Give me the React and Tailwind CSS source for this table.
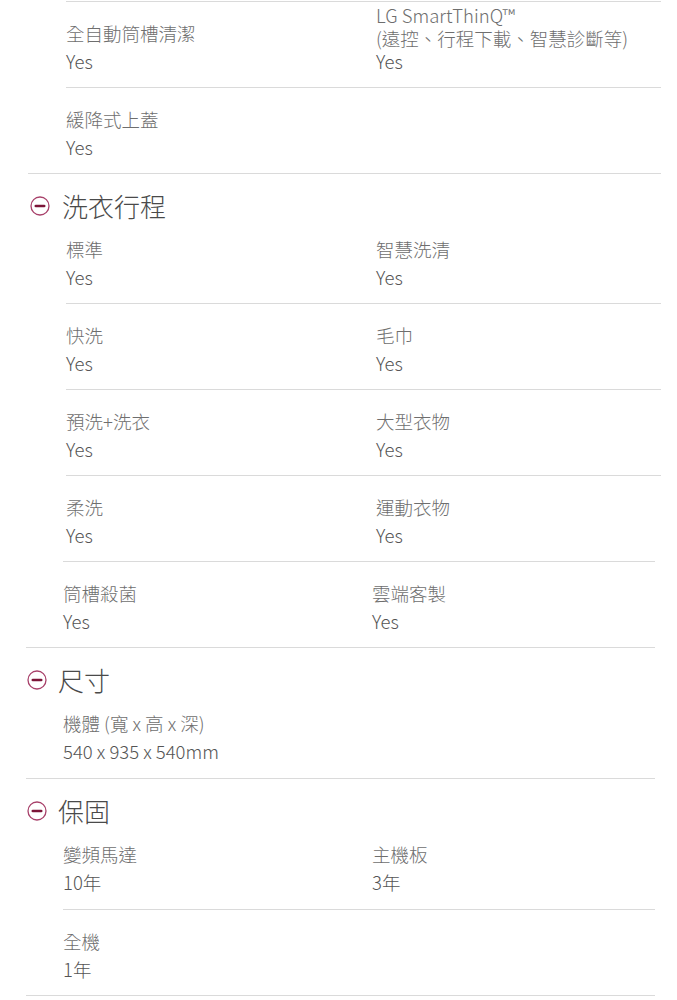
import React from 'react';

// Spec sheet: collapsible sections with a circled-minus toggle, two-column label/value rows.
// The reference is stitched from two captures, so rows come in two indent variants (a / b).

function MinusIcon() {
  return (
    <svg width="20" height="20" viewBox="0 0 20 20" className="shrink-0">
      <circle cx="10" cy="10" r="9" fill="none" stroke="#a8416a" strokeWidth="1.3" />
      <line x1="5.8" y1="10" x2="14.2" y2="10" stroke="#7c1538" strokeWidth="2.6" strokeLinecap="round" />
    </svg>
  );
}

function Cell({ label, value }) {
  if (!label) return <div />;
  return (
    <div className="flex flex-col">
      <span className="text-[#6e6e6e]">{label}</span>
      <span className="text-[#555]">{value}</span>
    </div>
  );
}

function Row({ items, variant = 'a', first = false }) {
  const [left, right] = items;
  const base = 'pt-[17px] pb-[12px] text-[18.5px] leading-[28px] font-light';
  const border = first ? '' : 'border-t border-[#dadada]';
  const cols = variant === 'a' ? 'grid grid-cols-[310px_1fr]' : 'grid grid-cols-[309px_1fr]';
  let size = 'h-[86px]';
  if (first) size = variant === 'a' ? '!pt-[11px] h-[79px]' : '!pt-[11px] h-[80px]';
  return (
    <div className={`${base} ${border} ${cols} ${size}`}>
      <Cell {...left} />
      <Cell {...(right || {})} />
    </div>
  );
}

function SectionHeader({ title, variant }) {
  return (
    <div className="pt-[14px] h-[50px] flex items-center">
      <div className={variant === 'a' ? 'ml-[2px] mr-[12px] flex' : 'ml-[1px] mr-[11px] flex'}>
        <MinusIcon />
      </div>
      <h2 className="text-[26px] leading-[36px] text-[#4a4a4a] font-light">{title}</h2>
    </div>
  );
}

export default function App() {
  return (
    <div className="w-[677px] h-[1000px] overflow-hidden bg-white font-['Noto_Sans_CJK_TC','Noto_Sans',sans-serif]">
      {/* tail of previous section */}
      <div className="mt-px ml-[66px] mr-[16px]">
        <div className="pt-[17px] pb-[12px] text-[18.5px] leading-[28px] font-light border-t border-[#dadada] grid grid-cols-[310px_1fr] h-[86px]">
          <Cell label="全自動筒槽清潔" value="Yes" />
          <div className="flex flex-col justify-end">
            <div className="text-[#6e6e6e] leading-[23px] -mt-[18px]">
              <div>LG SmartThinQ™</div>
              <div>(遠控、行程下載、智慧診斷等)</div>
            </div>
            <span className="text-[#555] leading-[22px] mb-[3px]">Yes</span>
          </div>
        </div>
        <Row items={[{ label: '緩降式上蓋', value: 'Yes' }]} />
      </div>

      {/* 洗衣行程 */}
      <div className="ml-[28px] mr-[16px] border-t border-[#dadada]">
        <SectionHeader title="洗衣行程" variant="a" />
        <div className="ml-[38px]">
          <Row first items={[{ label: '標準', value: 'Yes' }, { label: '智慧洗清', value: 'Yes' }]} />
          <Row items={[{ label: '快洗', value: 'Yes' }, { label: '毛巾', value: 'Yes' }]} />
          <Row items={[{ label: '預洗+洗衣', value: 'Yes' }, { label: '大型衣物', value: 'Yes' }]} />
          <Row items={[{ label: '柔洗', value: 'Yes' }, { label: '運動衣物', value: 'Yes' }]} />
        </div>
        <div className="ml-[35px] mr-[6px]">
          <Row variant="b" items={[{ label: '筒槽殺菌', value: 'Yes' }, { label: '雲端客製', value: 'Yes' }]} />
        </div>
      </div>

      {/* 尺寸 */}
      <div className="ml-[26px] mr-[22px] border-t border-[#dadada]">
        <SectionHeader title="尺寸" variant="b" />
        <div className="ml-[37px]">
          <Row first variant="b" items={[{ label: '機體 (寬 x 高 x 深)', value: '540 x 935 x 540mm' }]} />
        </div>
      </div>

      {/* 保固 */}
      <div className="ml-[26px] mr-[22px] border-t border-[#dadada]">
        <SectionHeader title="保固" variant="b" />
        <div className="ml-[37px]">
          <Row first variant="b" items={[{ label: '變頻馬達', value: '10年' }, { label: '主機板', value: '3年' }]} />
          <Row variant="b" items={[{ label: '全機', value: '1年' }]} />
        </div>
      </div>
      <div className="ml-[26px] mr-[22px] border-t border-[#dadada]" />
    </div>
  );
}
